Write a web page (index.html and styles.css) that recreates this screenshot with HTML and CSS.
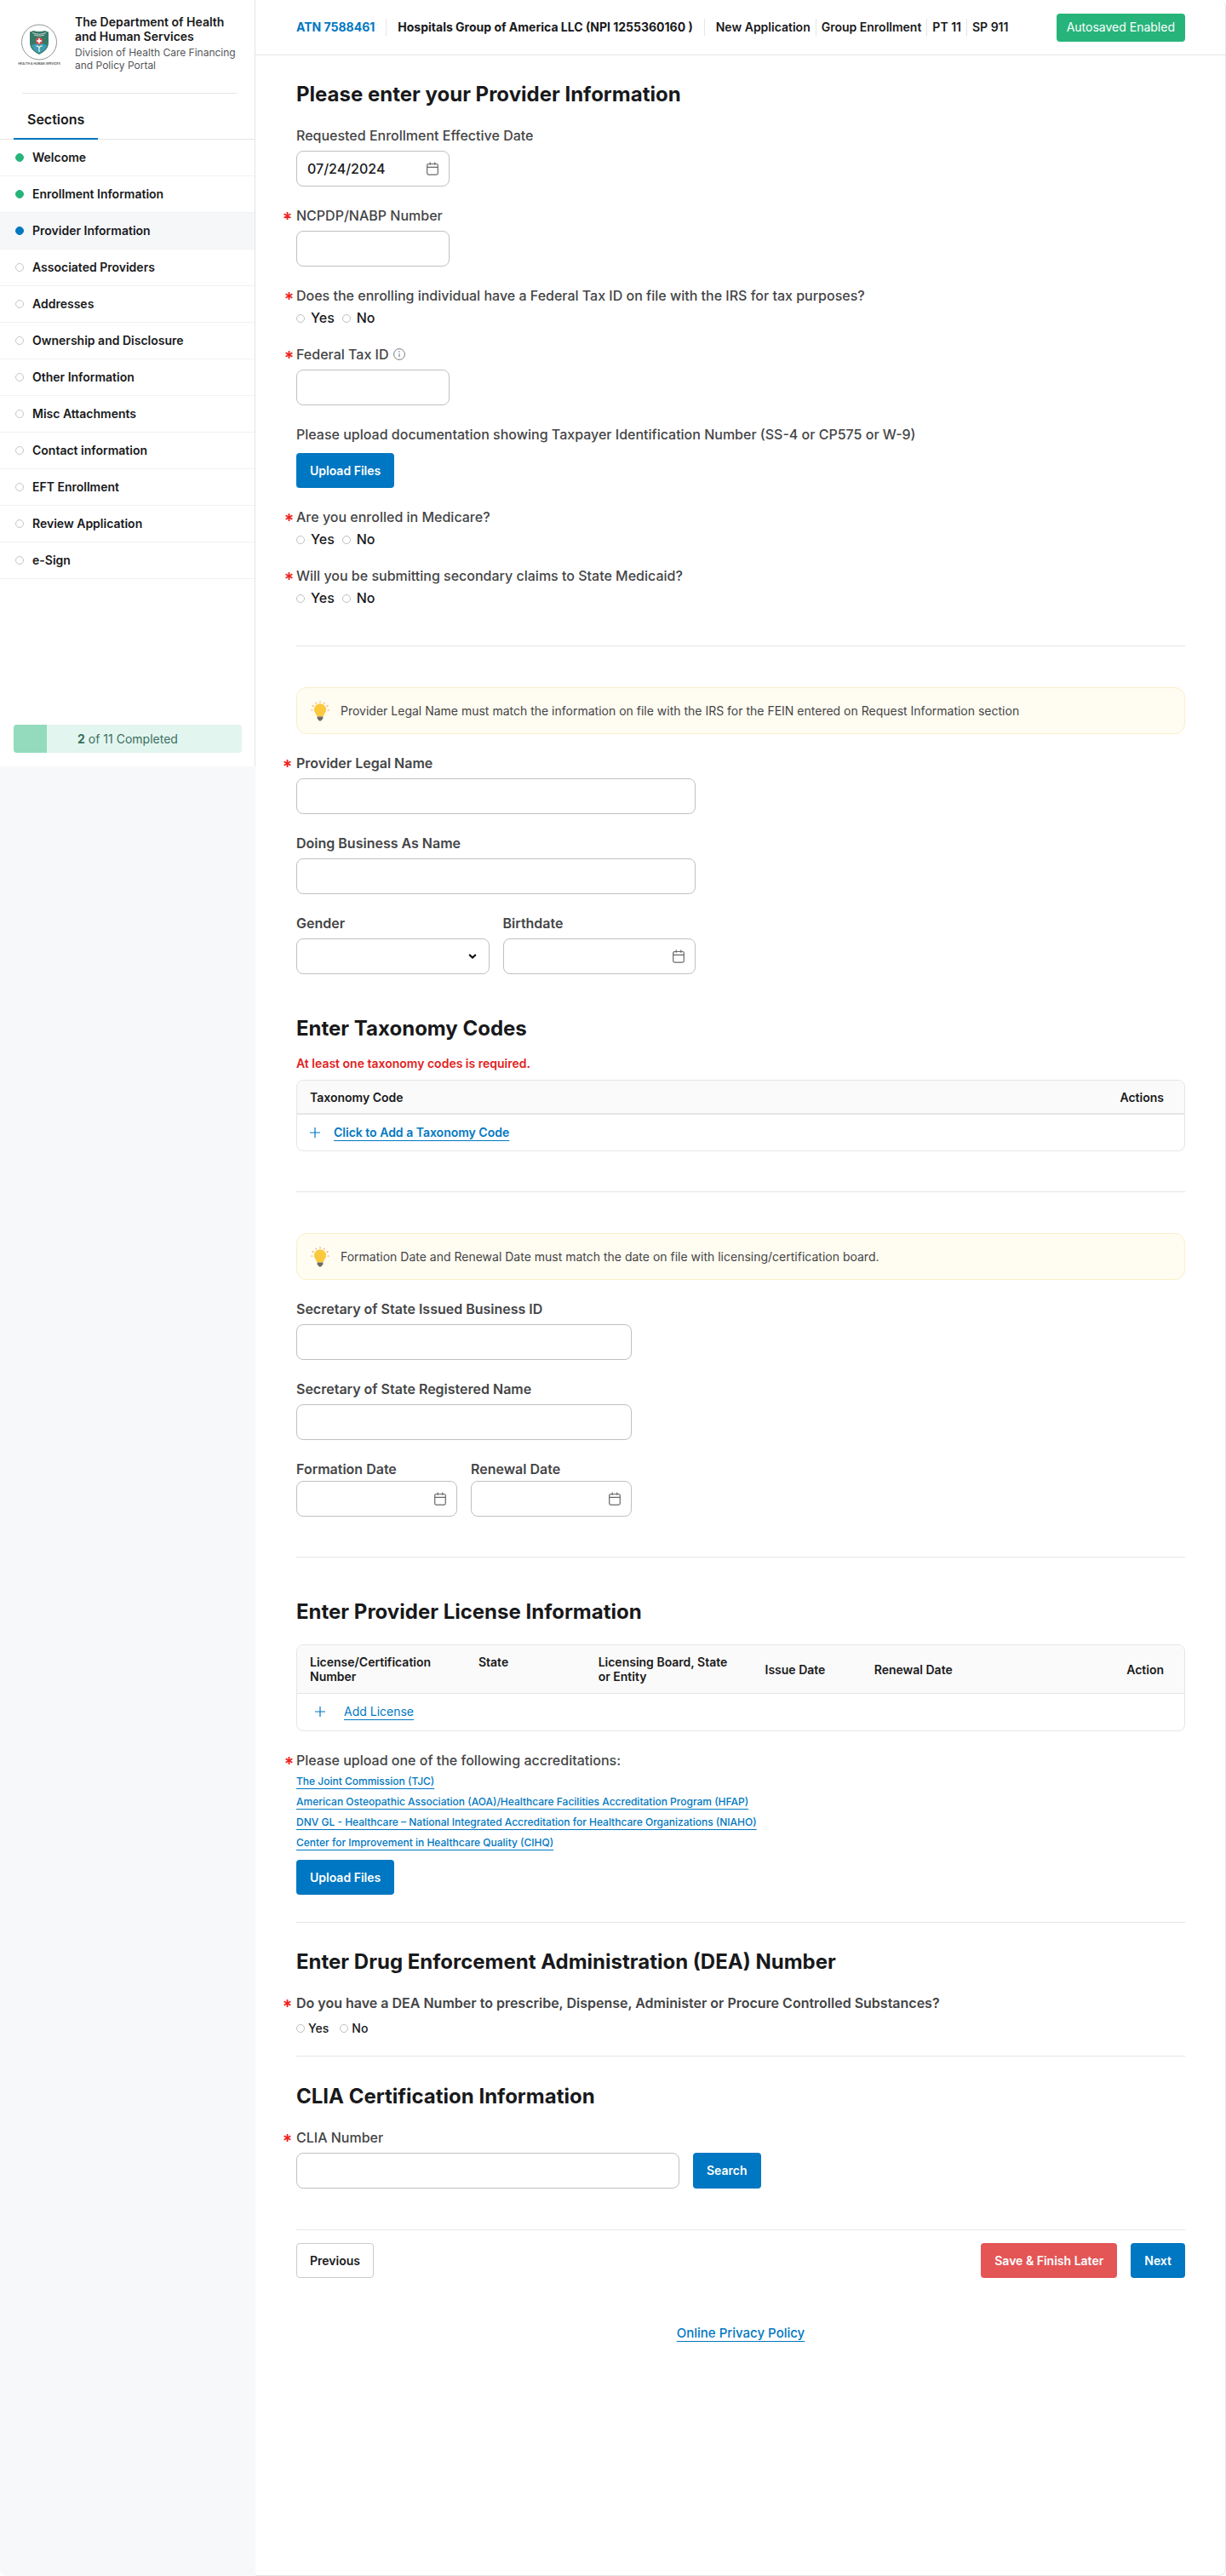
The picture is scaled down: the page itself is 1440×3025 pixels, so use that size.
FILE: index.html
```html
<!DOCTYPE html>
<html lang="en">
<head>
<meta charset="utf-8">
<meta name="viewport" content="width=device-width, initial-scale=1">
<title>Provider Information</title>
<link rel="stylesheet" href="styles.css">
</head>
<body>
<svg class="sprite" aria-hidden="true">
  <symbol id="i-asterisk" viewBox="0 0 9 9"><path d="M4.500 0v9M.6 2.250l7.800 4.500M8.400 2.250L.6 6.750" stroke="currentColor" stroke-width="1.800" fill="none"/></symbol>
  <symbol id="i-calendar" viewBox="0 0 14 16"><path d="M2.500 2.500h9a1.800 1.800 0 0 1 1.800 1.800v9a1.800 1.800 0 0 1-1.800 1.800h-9A1.800 1.800 0 0 1 .7 13.300v-9a1.800 1.800 0 0 1 1.800-1.800zM.7 6.300h12.600M4.200.5v3.300M9.800.5v3.300" fill="none" stroke="currentColor" stroke-width="1.200"/></symbol>
  <symbol id="i-plus" viewBox="0 0 12 12"><path d="M6 0v12M0 6h12" stroke="currentColor" stroke-width="1.200" fill="none"/></symbol>
  <symbol id="i-bulb" viewBox="0 0 22 24">
    <path d="M11 .3v2M5.700 1.700l1 1.800M16.300 1.700l-1 1.800M1.600 5.400l1.900 1M20.400 5.400l-1.900 1M.2 11h2.200M19.600 11h2.200" stroke="#f2a968" stroke-width="1.200" fill="none"/>
    <path d="M11 3.300a7 7 0 0 1 7 7c0 3.400-2.400 4.600-3.400 8.200H7.400C6.400 14.900 4 13.700 4 10.300a7 7 0 0 1 7-7z" fill="#fbc93d"/>
    <path d="M7.600 18.500h6.800v2.400l-1.300 1.200c-.3 1-.9 1.500-2.100 1.500s-1.800-.5-2.100-1.500l-1.300-1.200z" fill="#6b6b66"/>
  </symbol>
</svg>

<div class="app">
  <aside class="rail">
    <div class="sidebar">
      <div class="brand">
        <svg class="brand-logo" viewBox="0 0 104 100" role="img" aria-label="Health &amp; Human Services">
          <g transform="scale(2)">
            <circle cx="26" cy="21.500" r="20.500" fill="#fff" stroke="#8f9694" stroke-width="1"/>
            <path d="M15 9.500q2.500-.2 4-1.500 3.500 1 7 1t7-1q1.500 1.300 4 1.500v12.500c0 7-5 11-11 14-6-3-11-7-11-14z" fill="#357a68"/>
            <path d="M18 10.500q8 3.500 16 0M20 13q6 2 12 0" stroke="#b9cbc4" stroke-width="1.200" fill="none"/>
            <path d="M17 25q9-4 18 0c-1 5-5 7.500-9 9.500-4-2-8-4.500-9-9.500z" fill="#3f9db4"/>
            <circle cx="26" cy="20" r="4.200" fill="#dc4a4a"/>
            <path d="M26 17.300v5.400M23.300 20h5.400" stroke="#fff" stroke-width="1.800"/>
            <path d="M26 33v-5M22.500 26q3.500 0 3.500 3 0-3 3.500-3" stroke="#d8ecdf" stroke-width="1.400" fill="none"/>
          </g>
          <text class="brand-mark" x="52" y="95" text-anchor="middle">HEALTH &amp; HUMAN SERVICES</text>
        </svg>
        <div>
          <p class="brand-name">The Department of Health and Human Services</p>
          <p class="brand-sub">Division of Health Care Financing and Policy Portal</p>
        </div>
      </div>
      <div class="tabs"><span class="tab">Sections</span></div>
      <nav aria-label="Sections">
        <ul class="steps">
          <li><a class="step step--done" href="#">Welcome</a></li>
          <li><a class="step step--done" href="#">Enrollment Information</a></li>
          <li><a class="step step--current" href="#" aria-current="step">Provider Information</a></li>
          <li><a class="step" href="#">Associated Providers</a></li>
          <li><a class="step" href="#">Addresses</a></li>
          <li><a class="step" href="#">Ownership and Disclosure</a></li>
          <li><a class="step" href="#">Other Information</a></li>
          <li><a class="step" href="#">Misc Attachments</a></li>
          <li><a class="step" href="#">Contact information</a></li>
          <li><a class="step" href="#">EFT Enrollment</a></li>
          <li><a class="step" href="#">Review Application</a></li>
          <li><a class="step" href="#">e-Sign</a></li>
        </ul>
      </nav>
      <div class="progress">
        <span class="progress-fill" style="width:14.5%"></span>
        <span class="progress-text"><b>2</b> of 11 Completed</span>
      </div>
    </div>
  </aside>

  <div class="page">
    <header class="topbar">
      <ul class="crumbs">
        <li class="crumb-main atn">ATN 7588461</li>
        <li class="crumb-main">Hospitals Group of America LLC (NPI 1255360160 )</li>
        <li>
          <ul class="crumbs crumbs--tight">
            <li>New Application</li>
            <li>Group Enrollment</li>
            <li>PT 11</li>
            <li>SP 911</li>
          </ul>
        </li>
      </ul>
      <span class="badge">Autosaved Enabled</span>
    </header>

    <main class="content">
      <form>
        <h1 class="heading">Please enter your Provider Information</h1>
        <div class="fields">
          <div class="field field--short">
            <label for="effective">Requested Enrollment Effective Date</label>
            <div class="control date">
              <input id="effective" type="text" value="07/24/2024">
              <button type="button" aria-label="Choose date"><svg><use href="#i-calendar"/></svg></button>
            </div>
          </div>
          <div class="field field--short">
            <label class="required required--wide" for="ncpdp"><svg><use href="#i-asterisk"/></svg>NCPDP/NABP Number</label>
            <input class="control" id="ncpdp" type="text">
          </div>
          <fieldset class="field">
            <legend class="required"><svg><use href="#i-asterisk"/></svg>Does the enrolling individual have a Federal Tax ID on file with the IRS for tax purposes?</legend>
            <div class="radios">
              <label><input type="radio" name="taxid">Yes</label>
              <label><input type="radio" name="taxid">No</label>
            </div>
          </fieldset>
          <div class="field field--short">
            <label class="required" for="fein"><svg><use href="#i-asterisk"/></svg>Federal Tax ID
              <svg class="info" viewBox="0 0 14 14"><circle cx="7" cy="7" r="6.400" fill="none" stroke="currentColor" stroke-width="1"/><path d="M7 6.200v4" stroke="currentColor" stroke-width="1.100"/><circle cx="7" cy="4" r=".8" fill="currentColor"/></svg>
            </label>
            <input class="control" id="fein" type="text">
          </div>
          <div class="field field--upload">
            <span class="label">Please upload documentation showing Taxpayer Identification Number (SS-4 or CP575 or W-9)</span>
            <button class="btn btn--primary" type="button">Upload Files</button>
          </div>
          <fieldset class="field">
            <legend class="required"><svg><use href="#i-asterisk"/></svg>Are you enrolled in Medicare?</legend>
            <div class="radios">
              <label><input type="radio" name="medicare">Yes</label>
              <label><input type="radio" name="medicare">No</label>
            </div>
          </fieldset>
          <fieldset class="field">
            <legend class="required"><svg><use href="#i-asterisk"/></svg>Will you be submitting secondary claims to State Medicaid?</legend>
            <div class="radios">
              <label><input type="radio" name="medicaid">Yes</label>
              <label><input type="radio" name="medicaid">No</label>
            </div>
          </fieldset>
        </div>

        <hr class="rule">

        <div class="fields">
          <p class="notice"><svg><use href="#i-bulb"/></svg>Provider Legal Name must match the information on file with the IRS for the FEIN entered on Request Information section</p>
          <div class="fields fields--names">
            <div class="field">
              <label class="required required--wide strong" for="legal"><svg><use href="#i-asterisk"/></svg>Provider Legal Name</label>
              <input class="control" id="legal" type="text">
            </div>
            <div class="field">
              <label class="strong" for="dba">Doing Business As Name</label>
              <input class="control" id="dba" type="text">
            </div>
            <div class="pair">
              <div class="field">
                <label class="strong" for="gender">Gender</label>
                <div class="select">
                  <select class="control" id="gender"><option></option><option>Female</option><option>Male</option></select>
                  <svg viewBox="0 0 10 6"><path d="M1.200 1L5 4.600 8.800 1" fill="none" stroke="#000" stroke-width="2"/></svg>
                </div>
              </div>
              <div class="field">
                <label class="strong" for="birth">Birthdate</label>
                <div class="control date">
                  <input id="birth" type="text">
                  <button type="button" aria-label="Choose date"><svg><use href="#i-calendar"/></svg></button>
                </div>
              </div>
            </div>
          </div>
        </div>

        <section class="taxonomy">
          <h2 class="heading">Enter Taxonomy Codes</h2>
          <p class="error">At least one taxonomy codes is required.</p>
          <table class="grid grid--taxonomy">
            <thead><tr><th>Taxonomy Code</th><th class="end">Actions</th></tr></thead>
            <tbody><tr><td colspan="2"><a class="add strong" href="#"><svg><use href="#i-plus"/></svg><span>Click to Add a Taxonomy Code</span></a></td></tr></tbody>
          </table>
        </section>

        <hr class="rule">

        <div class="fields">
          <p class="notice"><svg><use href="#i-bulb"/></svg>Formation Date and Renewal Date must match the date on file with licensing/certification board.</p>
          <div class="fields fields--state">
            <div class="field">
              <label class="strong" for="sosid">Secretary of State Issued Business ID</label>
              <input class="control" id="sosid" type="text">
            </div>
            <div class="field">
              <label class="strong" for="sosname">Secretary of State Registered Name</label>
              <input class="control" id="sosname" type="text">
            </div>
            <div class="pair">
              <div class="field field--tight">
                <label class="strong" for="formation">Formation Date</label>
                <div class="control date">
                  <input id="formation" type="text">
                  <button type="button" aria-label="Choose date"><svg><use href="#i-calendar"/></svg></button>
                </div>
              </div>
              <div class="field field--tight">
                <label class="strong" for="renewal">Renewal Date</label>
                <div class="control date">
                  <input id="renewal" type="text">
                  <button type="button" aria-label="Choose date"><svg><use href="#i-calendar"/></svg></button>
                </div>
              </div>
            </div>
          </div>
        </div>

        <hr class="rule">

        <section>
          <h2 class="heading">Enter Provider License Information</h2>
          <table class="grid grid--license">
            <colgroup><col class="c-number"><col class="c-state"><col class="c-board"><col class="c-issue"><col><col></colgroup>
            <thead>
              <tr><th>License/Certification Number</th><th class="top">State</th><th>Licensing Board, State or Entity</th><th>Issue Date</th><th>Renewal Date</th><th class="end">Action</th></tr>
            </thead>
            <tbody><tr><td colspan="6"><a class="add add--indent" href="#"><svg><use href="#i-plus"/></svg><span>Add License</span></a></td></tr></tbody>
          </table>
          <span class="label required"><svg><use href="#i-asterisk"/></svg>Please upload one of the following accreditations:</span>
          <ul class="links">
            <li><a href="#">The Joint Commission (TJC)</a></li>
            <li><a href="#">American Osteopathic Association (AOA)/Healthcare Facilities Accreditation Program (HFAP)</a></li>
            <li><a href="#">DNV GL - Healthcare – National Integrated Accreditation for Healthcare Organizations (NIAHO)</a></li>
            <li><a href="#">Center for Improvement in Healthcare Quality (CIHQ)</a></li>
          </ul>
          <button class="btn btn--primary" type="button">Upload Files</button>
        </section>

        <hr class="rule rule--close">

        <section>
          <h2 class="heading">Enter Drug Enforcement Administration (DEA) Number</h2>
          <fieldset class="field">
            <legend class="required required--wide strong"><svg><use href="#i-asterisk"/></svg>Do you have a DEA Number to prescribe, Dispense, Administer or Procure Controlled Substances?</legend>
            <div class="radios radios--small">
              <label><input type="radio" name="dea">Yes</label>
              <label><input type="radio" name="dea">No</label>
            </div>
          </fieldset>
        </section>

        <hr class="rule rule--closer">

        <section>
          <h2 class="heading">CLIA Certification Information</h2>
          <div class="field">
            <label class="required required--wide" for="clia"><svg><use href="#i-asterisk"/></svg>CLIA Number</label>
            <div class="search">
              <input class="control" id="clia" type="text">
              <button class="btn btn--primary" type="button">Search</button>
            </div>
          </div>
        </section>

        <hr class="rule rule--end">

        <div class="actions">
          <button class="btn btn--plain" type="button">Previous</button>
          <div class="actions-end">
            <button class="btn btn--danger" type="button">Save &amp; Finish Later</button>
            <button class="btn btn--primary" type="submit">Next</button>
          </div>
        </div>
      </form>
      <footer class="footer"><a href="#">Online Privacy Policy</a></footer>
    </main>
  </div>
</div>
</body>
</html>
```
FILE: styles.css
```css
:root {
  --ink: #18191b;
  --label: #444546;
  --blue: #0077c2;
  --line: #e4e5e6;
  --field: #bfc0c2;
  --green: #27b47b;
}

*, *::before { box-sizing: border-box; }

body {
  margin: 0;
  background: #fff;
  color: var(--ink);
  font: 14px/20px Inter, "Liberation Sans", sans-serif;
}

h1, h2, p, ul, fieldset, legend { margin: 0; padding: 0; }
ul { list-style: none; }
fieldset { border: 0; min-width: 0; }
input, select, button { font: inherit; color: inherit; }
a { color: var(--blue); text-underline-offset: 4px; }
svg { display: block; flex: none; }
.sprite { display: none; }

.app {
  display: flex;
  min-height: 100vh;
  border-radius: 8px;
  overflow: hidden;
}

/* Sidebar */
.rail { flex: none; width: 300px; background: #f7f8fa; }
.sidebar {
  background: #fff;
  border-right: 1px solid var(--line);
  padding-bottom: 16px;
}
.brand {
  display: flex;
  gap: 16px;
  margin: 0 20px;
  padding: 17px 0 24px;
  height: 109px;
}
.brand-logo { width: 52px; height: 50px; margin-top: 11px; overflow: visible; }
.brand-mark { font-size: 7px; font-weight: 600; fill: #4c4f52; }
.brand-name { font-weight: 600; line-height: 17px; }
.brand-sub { margin-top: 3px; font-size: 12px; line-height: 15px; color: #55575a; }
.tabs {
  display: flex;
  padding: 0 16px;
  border-bottom: 1px solid var(--line);
  position: relative;
}
.tabs::before {
  content: "";
  position: absolute;
  inset: 0 21px auto 26px;
  border-top: 1px solid var(--line);
}
.tab {
  padding: 21px 16px 11px;
  margin-bottom: -1px;
  border-bottom: 2px solid var(--blue);
  font-size: 16px;
  font-weight: 600;
  line-height: 21px;
}
.step {
  display: flex;
  align-items: center;
  gap: 10px;
  height: 43px;
  padding: 0 18px;
  border-bottom: 1px solid #f1f2f3;
  color: var(--ink);
  font-weight: 600;
  text-decoration: none;
}
.step::before {
  content: "";
  width: 10px;
  height: 10px;
  border: 1px solid #c4c6c8;
  border-radius: 50%;
}
.step--done::before { background: var(--green); border-color: var(--green); }
.step--current { background: #f5f7f9; }
.step--current::before { background: var(--blue); border-color: var(--blue); }
.progress {
  display: grid;
  align-items: center;
  margin: 171px 15px 0 16px;
  height: 33px;
  border-radius: 4px;
  overflow: hidden;
  background: #e3f5ef;
  color: #3a6f5e;
}
.progress > * { grid-area: 1 / 1; }
.progress-fill { height: 100%; background: #93dbbc; }
.progress-text { text-align: center; }

/* Top bar */
.page {
  flex: 1;
  min-width: 0;
  border: solid var(--line);
  border-width: 0 1px 1px 0;
  border-radius: 0 8px 8px 0;
}
.topbar {
  display: flex;
  align-items: center;
  justify-content: space-between;
  height: 65px;
  padding: 0 47px 0 48px;
  border-bottom: 1px solid var(--line);
}
.crumbs { display: flex; align-items: center; font-weight: 600; }
.crumbs > li + li { margin-left: 13px; padding-left: 13px; border-left: 1px solid var(--line); }
.crumbs--tight > li + li { margin-left: 6px; padding-left: 6px; }
.crumbs .crumb-main { font-weight: 700; }
.crumbs .atn { color: var(--blue); }
.badge {
  padding: 6px 12px 7px;
  border-radius: 4px;
  background: var(--green);
  color: #fff;
}

/* Form */
.content { padding: 30px 47px 24px 48px; }
.heading { margin-bottom: 22px; font-size: 24px; line-height: 32px; font-weight: 700; }
.fields { display: flex; flex-direction: column; gap: 24px; }
.fields--names { max-width: 469px; }
.fields--state { max-width: 394px; }
.field { display: flex; flex-direction: column; gap: 8px; min-width: 0; }
.field--short .control { width: 180px; }
.field--tight { gap: 4px; }
.field--upload { gap: 12px; align-items: flex-start; }
.pair { display: grid; grid-template-columns: 1fr 1fr; gap: 16px; }
.field > label, .label, legend {
  font-size: 16px;
  line-height: 20px;
  font-weight: 500;
  color: var(--label);
}
.field > .strong, legend.strong, .strong { font-weight: 600; }
.required { display: flex; align-items: center; gap: 4px; margin-left: -13px; }
.required--wide { gap: 6px; margin-left: -15px; }
.required > svg:first-child { width: 9px; height: 9px; color: #ee231f; }
.required .info { width: 14px; height: 14px; margin-left: 2px; color: #77797b; }
.control {
  width: 100%;
  height: 42px;
  padding: 0 12px;
  border: 1px solid var(--field);
  border-radius: 8px;
  background: #fff;
  font-size: 16px;
  font-weight: 500;
}
.date { display: flex; align-items: center; }
.date input { flex: 1; min-width: 0; width: 0; padding: 0; border: 0; background: none; outline: 0; }
.date button { padding: 0; border: 0; background: none; color: #66686a; }
.date svg { width: 14px; height: 16px; }
.select { display: grid; align-items: center; }
.select > * { grid-area: 1 / 1; }
.select select { appearance: none; }
.select svg { justify-self: end; width: 10px; height: 6px; margin-right: 15px; pointer-events: none; }
.radios { display: flex; gap: 9px; margin-top: 8px; font-size: 16px; line-height: 17px; font-weight: 500; }
.radios label { display: flex; align-items: center; gap: 7px; }
.radios input {
  appearance: none;
  width: 10px;
  height: 10px;
  margin: 0;
  border: 1px solid #bdbfc1;
  border-radius: 50%;
}
.radios input:checked { background: var(--blue); border-color: var(--blue); }
.radios--small { gap: 13px; margin-top: 12px; font-size: 14px; line-height: 16px; }
.radios--small label { gap: 4px; }

.rule { margin: 47px 0 48px; border: 0; border-top: 1px solid var(--line); }
.rule--close { margin: 32px 0 30px; }
.rule--closer { margin: 24px 0 31px; }
.rule--end { margin: 48px 0 15px; }

.notice {
  display: flex;
  align-items: center;
  gap: 13px;
  min-height: 55px;
  padding: 0 16px;
  border: 1px solid #f9efc9;
  border-radius: 12px;
  background: #fffcf1;
  color: var(--label);
}
.notice svg { width: 22px; height: 24px; }

.taxonomy { margin-top: 48px; }
.taxonomy .heading { margin-bottom: 15px; }
.error { margin-bottom: 9px; color: #e0211d; font-weight: 600; }

.grid {
  width: 100%;
  border: 1px solid var(--line);
  border-radius: 8px;
  border-spacing: 0;
  overflow: hidden;
}
.grid th {
  padding: 0 16px 0 15px;
  background: #fafafa;
  border-bottom: 1px solid var(--line);
  text-align: left;
  font-weight: 600;
  line-height: 17px;
}
.grid th.top { vertical-align: top; padding-top: 11px; }
.grid th.end { text-align: right; padding-right: 24px; }
.grid td { height: 43px; padding: 0 15px; }
.grid--taxonomy th { height: 40px; border-bottom-width: 2px; }
.grid--taxonomy td { height: 42px; }
.grid--license { table-layout: fixed; margin-bottom: 24px; }
.grid--license th { height: 57px; }
.c-number { width: 19%; }
.c-state { width: 13.5%; }
.c-board { width: 18.8%; }
.c-issue { width: 12.3%; }
.add { display: inline-flex; align-items: center; gap: 16px; text-decoration: none; }
.add span { text-decoration: underline; }
.add svg { width: 12px; height: 12px; }
.add--indent { gap: 22px; padding-left: 6px; }

.links { margin: 3px 0 8px; font-size: 12px; line-height: 24px; font-weight: 500; }

/* Buttons */
.btn {
  height: 41px;
  padding: 0 16px;
  border: 0;
  border-radius: 4px;
  font-weight: 600;
  color: #fff;
}
.btn--primary { background: var(--blue); }
.btn--danger { background: #e45556; }
.btn--plain { background: #fff; border: 1px solid #c9cbcd; color: var(--ink); padding: 0 15px; }
.search { display: flex; gap: 16px; }
.search .control { max-width: 450px; }
.search .btn { height: 42px; }
.actions, .actions-end { display: flex; justify-content: space-between; gap: 16px; }

.footer { margin-top: 55px; text-align: center; font-size: 15px; font-weight: 500; }
```
